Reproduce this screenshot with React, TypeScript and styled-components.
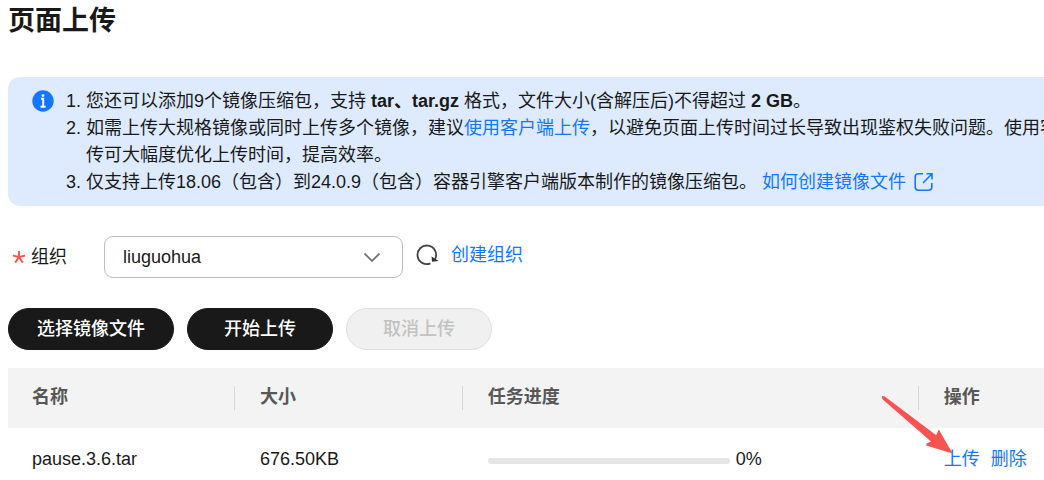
import React from 'react';
import styled, { createGlobalStyle } from 'styled-components';

const GlobalStyle = createGlobalStyle`
  *, *::before, *::after { box-sizing: border-box; }
  body {
    margin: 0;
    background: #fff;
    color: #191919;
    font-family: 'Liberation Sans', 'Noto Sans CJK SC', sans-serif;
    font-size: 18px;
    line-height: 27px;
    overflow: hidden;
  }
  button, select { font: inherit; color: inherit; }
`;

const Page = styled.main`
  padding-left: 8px;
  overflow: hidden;
`;

const Title = styled.h1`
  margin: 0;
  height: 77px;
  font-size: 27px;
  line-height: 42px;
  font-weight: 700;
`;

const Notice = styled.section`
  display: flex;
  padding: 11px 0 10px 24px;
  background: #deebff;
  border-radius: 12px 0 0 12px;
  overflow: hidden;
`;

const InfoIcon = styled.svg`
  flex: none;
  width: 22px;
  height: 22px;
  margin-top: 2px;
`;

const Tips = styled.ol`
  margin: 0;
  padding-left: 32px;
  white-space: nowrap;
`;

const Link = styled.a`
  color: #1476ff;
  text-decoration: none;
`;

const ExternalIcon = styled.svg`
  width: 20px;
  height: 20px;
  margin-left: 8px;
  vertical-align: -4px;
`;

const Field = styled.div`
  display: flex;
  align-items: center;
  margin-top: 30px;
  padding-left: 4px;
`;

const FieldLabel = styled.label`
  display: flex;
  align-items: center;
  gap: 5px;
  width: 92px;
`;

const RequiredMark = styled.svg`
  width: 14px;
  height: 14px;
`;

const SelectBox = styled.div`
  position: relative;
  width: 299px;
`;

const Select = styled.select`
  display: block;
  width: 100%;
  height: 42px;
  padding: 0 48px 0 18px;
  border: 1px solid #bdbdbd;
  border-radius: 9px;
  background: #fff;
  appearance: none;
`;

const Chevron = styled.svg`
  position: absolute;
  top: 16px;
  right: 22px;
  width: 18px;
  height: 11px;
  pointer-events: none;
`;

const FieldActions = styled.div`
  display: flex;
  align-items: center;
  gap: 12px;
  height: 38px;
  margin: 0 0 4px 13px;
`;

const RefreshButton = styled.button`
  display: flex;
  padding: 0;
  border: 0;
  background: none;

  svg { width: 23px; height: 23px; }
`;

const Toolbar = styled.div`
  display: flex;
  gap: 12px;
  margin: 30px 0 18px;
`;

const Button = styled.button`
  min-width: 146px;
  height: 42px;
  padding: 0 28px;
  border: 1px solid #191919;
  border-radius: 21px;
  background: #191919;
  color: #fff;
  font-weight: 500;

  & + & { margin-left: 1px; }

  &:disabled {
    border-color: #dfdfdf;
    background: #f0f0f0;
    color: #c2c2c2;
  }
`;

const Table = styled.table`
  width: 100%;
  border-collapse: collapse;
  table-layout: fixed;
  text-align: left;
`;

const HeadCell = styled.th<{ $width: string }>`
  width: ${({ $width }) => $width};
  height: 60px;
  padding: 0;
  background: #f3f3f3;
  color: #575757;
`;

const HeadLabel = styled.div<{ $divided?: boolean }>`
  height: 24px;
  padding-left: 24px;
  border-right: ${({ $divided }) => ($divided ? '1px solid #d6d6d6' : '0')};
  margin-right: 1px;
  line-height: 22px;
`;

const Cell = styled.td`
  height: 63px;
  padding: 0 0 0 24px;
  white-space: nowrap;
`;

const ProgressRow = styled.div`
  display: flex;
  align-items: center;
  gap: 6px;
`;

const ProgressTrack = styled.div`
  width: 56%;
  height: 6px;
  margin-top: 3px;
  border-radius: 3px;
  background: #e6e6e6;
`;

const RowActions = styled.div`
  position: relative;
  display: flex;
  gap: 11px;
`;

const PointerArrow = styled.svg`
  position: absolute;
  left: -64px;
  top: -51px;
  width: 76px;
  height: 62px;
  pointer-events: none;
`;

export default function App() {
  return (
    <>
      <GlobalStyle />
      <Page>
        <Title>页面上传</Title>

        <Notice>
          <InfoIcon viewBox="0 0 22 22" aria-hidden="true">
            <circle cx="11" cy="11" r="10.7" fill="#1476ff" />
            <circle cx="11" cy="5.6" r="1.4" fill="#fff" />
            <path d="M9 8.8H11.2V16.6M8.6 16.8H13.6" fill="none" stroke="#fff" strokeWidth="1.9" />
          </InfoIcon>
          <Tips>
            <li>
              您还可以添加9个镜像压缩包，支持 <b>tar、tar.gz</b> 格式，文件大小(含解压后)不得超过 <b>2 GB</b>。
            </li>
            <li>
              如需上传大规格镜像或同时上传多个镜像，建议<Link href="#client">使用客户端上传</Link>，以避免页面上传时间过长导致出现鉴权失败问题。使用客
              <br />
              传可大幅度优化上传时间，提高效率。
            </li>
            <li>
              仅支持上传18.06（包含）到24.0.9（包含）容器引擎客户端版本制作的镜像压缩包。{' '}
              <Link href="#help">
                如何创建镜像文件
                <ExternalIcon viewBox="0 0 20 20" fill="none" stroke="currentColor" strokeWidth="1.6" aria-hidden="true">
                  <path d="M9 1.8H4.5Q1.2 1.8 1.2 5V15Q1.2 18.2 4.5 18.2H14.5Q17.8 18.2 17.8 15V11M12.5 1.8H18V7.5M18 1.8L9 11" />
                </ExternalIcon>
              </Link>
            </li>
          </Tips>
        </Notice>

        <Field>
          <FieldLabel htmlFor="organization">
            <RequiredMark viewBox="0 0 14 14" fill="none" stroke="#fa5151" strokeWidth="1.9" aria-hidden="true">
              <path d="M7 1V7L1 5.6M7 7L13 5.6M7 7L3.2 12.6M7 7L10.8 12.6" />
            </RequiredMark>
            组织
          </FieldLabel>
          <SelectBox>
            <Select id="organization" defaultValue="liuguohua">
              <option>liuguohua</option>
            </Select>
            <Chevron viewBox="0 0 18 11" fill="none" stroke="#777" strokeWidth="1.8" aria-hidden="true">
              <path d="M1.5 1.5L9 9L16.5 1.5" />
            </Chevron>
          </SelectBox>
          <FieldActions>
            <RefreshButton type="button" aria-label="刷新">
              <svg viewBox="0 0 23 23" aria-hidden="true">
                <path
                  d="M14.4 19.4A9.3 9.3 0 1 1 19.4 14.4L18.8 16"
                  fill="none"
                  stroke="#444"
                  strokeWidth="1.8"
                />
                <path d="M15.6 12.6L16 17.8L22.6 16.9Z" fill="#333" />
              </svg>
            </RefreshButton>
            <Link href="#create">创建组织</Link>
          </FieldActions>
        </Field>

        <Toolbar>
          <Button type="button">选择镜像文件</Button>
          <Button type="button">开始上传</Button>
          <Button type="button" disabled>取消上传</Button>
        </Toolbar>

        <Table>
          <thead>
            <tr>
              <HeadCell $width="22%"><HeadLabel $divided>名称</HeadLabel></HeadCell>
              <HeadCell $width="22%"><HeadLabel $divided>大小</HeadLabel></HeadCell>
              <HeadCell $width="44%"><HeadLabel $divided>任务进度</HeadLabel></HeadCell>
              <HeadCell $width="12%"><HeadLabel>操作</HeadLabel></HeadCell>
            </tr>
          </thead>
          <tbody>
            <tr>
              <Cell>pause.3.6.tar</Cell>
              <Cell>676.50KB</Cell>
              <Cell>
                <ProgressRow>
                  <ProgressTrack role="progressbar" aria-label="任务进度" aria-valuenow={0} aria-valuemin={0} aria-valuemax={100} />
                  0%
                </ProgressRow>
              </Cell>
              <Cell>
                <RowActions>
                  <Link href="#upload">上传</Link>
                  <Link href="#delete">删除</Link>
                  <PointerArrow viewBox="880 395 76 62" aria-hidden="true">
                    <path
                      d="M882.4 396Q884 395.6 885.4 397L936.2 435.2L938.8 429.6L952.6 453.4L926.2 445.6L926.6 443.4L931 441.4L882.2 399Q881.4 396.8 882.4 396Z"
                      fill="#fa5151"
                    />
                  </PointerArrow>
                </RowActions>
              </Cell>
            </tr>
          </tbody>
        </Table>
      </Page>
    </>
  );
}
